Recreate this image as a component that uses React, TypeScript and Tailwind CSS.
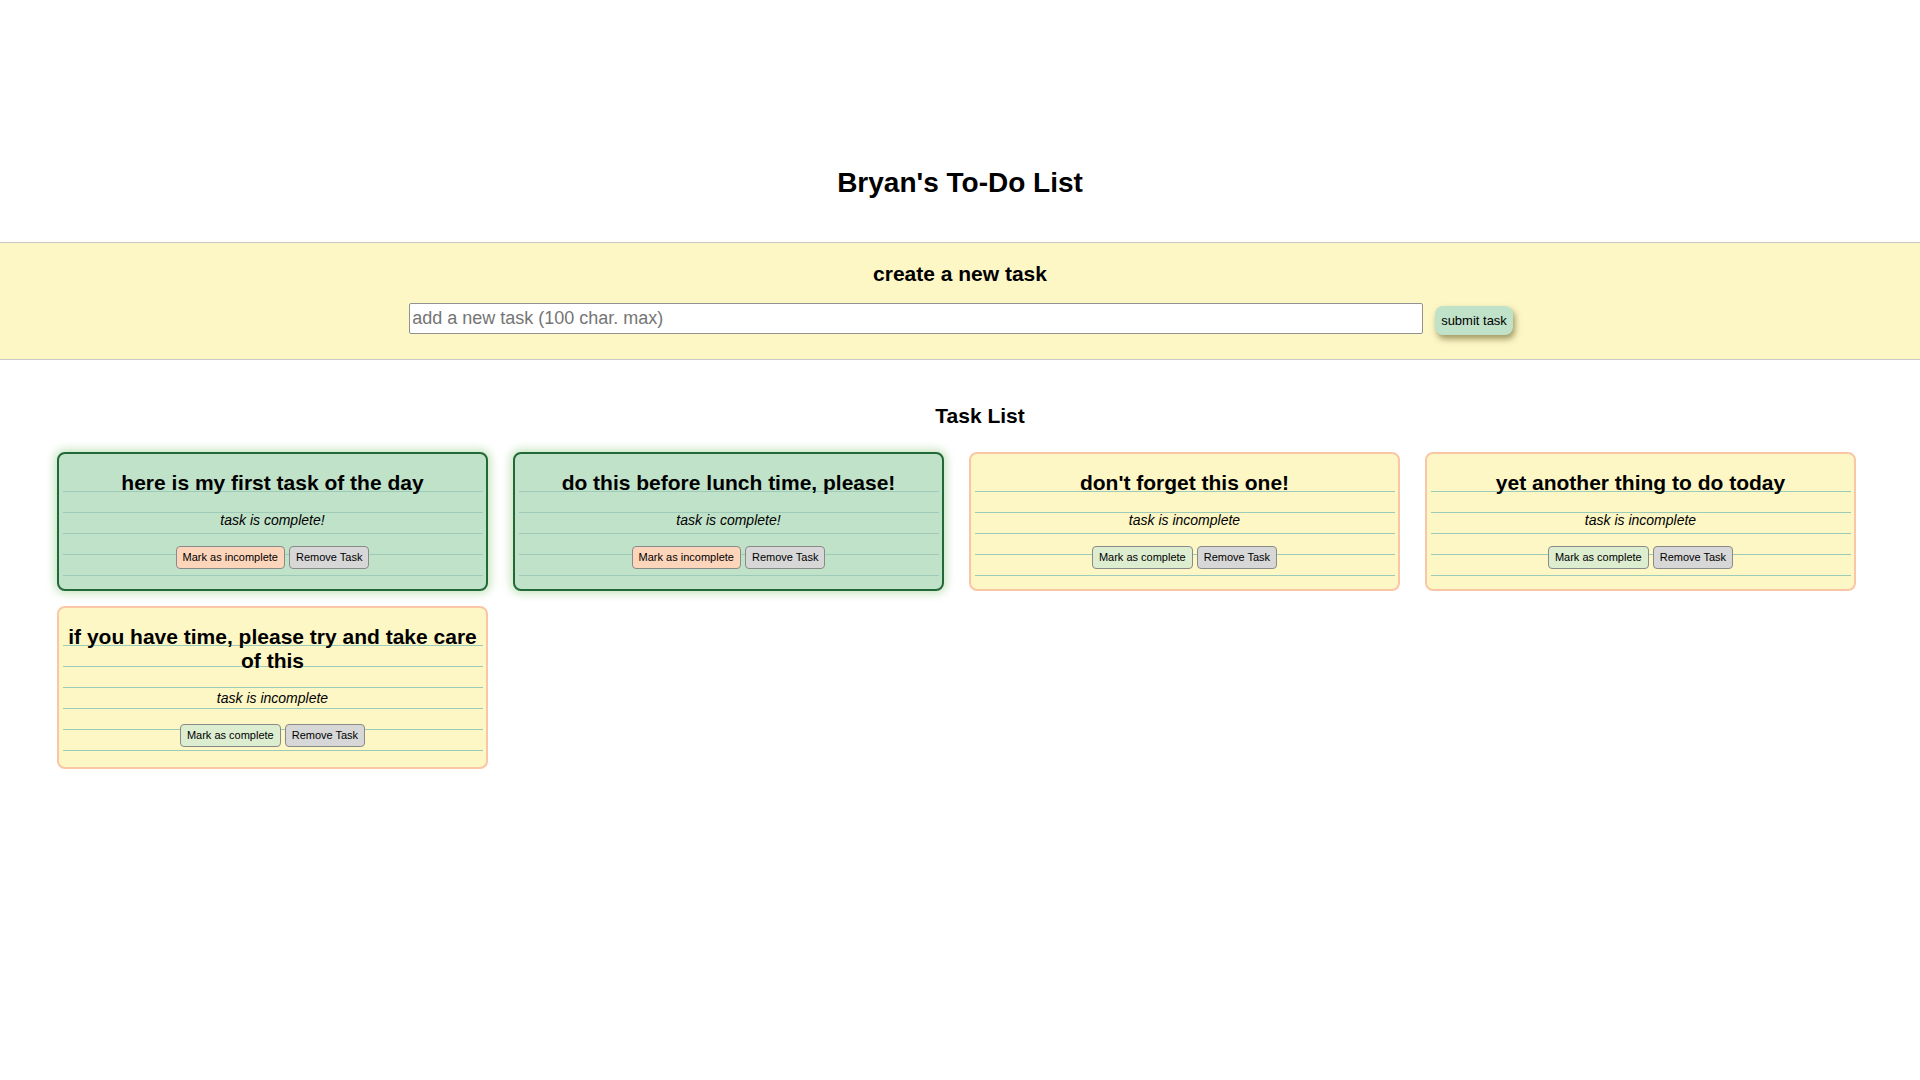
import React from "react";

type Task = { title: string; done: boolean };

const tasks: Task[] = [
  { title: "here is my first task of the day", done: true },
  { title: "do this before lunch time, please!", done: true },
  { title: "don't forget this one!", done: false },
  { title: "yet another thing to do today", done: false },
  { title: "if you have time, please try and take care of this", done: false },
];

function Card({ task }: { task: Task }) {
  return (
    <div
      className={
        task.done
          ? "rounded-[8px] border-2 border-[#22693a] bg-[#c0e2c9] px-[3.5px] pt-[17px] pb-[13px] shadow-[0_0_9px_3px_rgba(180,220,170,0.7)]"
          : "rounded-[8px] border-2 border-[#fbc6a6] bg-[#fdf7c6] px-[3.5px] pt-[17px] pb-[13px]"
      }
    >
      <div className="flex flex-col bg-[linear-gradient(to_bottom,transparent_20px,#9ecbb9_20px)] bg-[length:100%_21px] pb-[7px]">
        <h3 className="text-center text-[21px] font-bold leading-[24px] text-black">
          {task.title}
        </h3>
        <p className="mt-[15px] text-center text-[14px] italic leading-[21px] text-black">
          {task.done ? "task is complete!" : "task is incomplete"}
        </p>
        <div className="mt-[15px] flex justify-center gap-[4px]">
          <button
            className={
              task.done
                ? "h-[23px] rounded-[4px] border border-[#8a8a8a] bg-[#fdd5bb] px-[6px] text-[11px] leading-[13px] text-black"
                : "h-[23px] rounded-[4px] border border-[#8a8a8a] bg-[#dcedd0] px-[6px] text-[11px] leading-[13px] text-black"
            }
          >
            {task.done ? "Mark as incomplete" : "Mark as complete"}
          </button>
          <button className="h-[23px] rounded-[4px] border border-[#8a8a8a] bg-[#d7d7d7] px-[6px] text-[11px] leading-[13px] text-black">
            Remove Task
          </button>
        </div>
      </div>
    </div>
  );
}

export default function App() {
  return (
    <div className="min-h-[1080px] bg-white font-['Liberation_Sans',Arial,sans-serif] text-black">
      <header className="pt-[167px] pb-[43px]">
        <h1 className="text-center text-[28px] font-bold leading-[32px]">Bryan's To-Do List</h1>
      </header>
      <section className="border-y border-[#c8c8c8] bg-[#fdf7c6] pt-[19px] pb-[24px]">
        <h2 className="text-center text-[21px] font-bold leading-[24px]">create a new task</h2>
        <div className="mt-[17px] flex items-start justify-center gap-[12px] pl-[2px]">
          <input
            type="text"
            placeholder="add a new task (100 char. max)"
            className="h-[31px] w-[1014px] rounded-[2px] border border-[#929292] bg-white px-[2px] text-[18px] text-black outline-none placeholder:text-[#757575]"
          />
          <button className="mt-[3px] h-[29px] rounded-[8px] bg-[#bfe2c8] px-[6px] text-[13px] leading-[15px] text-black shadow-[2px_4px_6px_rgba(70,60,0,0.5)]">
            submit task
          </button>
        </div>
      </section>
      <h2 className="mt-[44px] pl-[40px] text-center text-[21px] font-bold leading-[24px]">Task List</h2>
      <div className="mt-[24px] grid grid-cols-[repeat(4,431px)] items-start gap-x-[25px] gap-y-[15px] pl-[57px]">
        {tasks.map((t, i) => (
          <Card key={i} task={t} />
        ))}
      </div>
    </div>
  );
}
